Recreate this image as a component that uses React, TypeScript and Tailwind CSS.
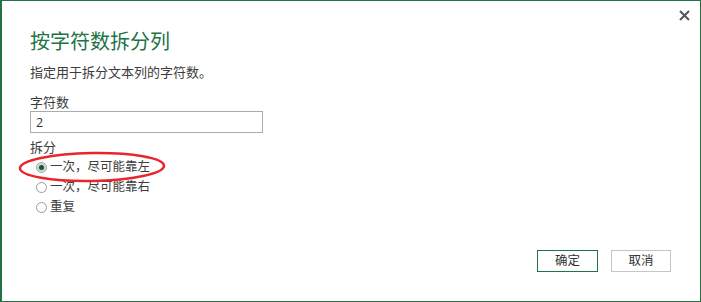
import React, { useState } from 'react';

const FONT = '"Segoe UI","Open Sans","Noto Sans CJK SC","Microsoft YaHei",sans-serif';

const options = ['一次，尽可能靠左', '一次，尽可能靠右', '重复'];

function Radio({ checked }: { checked: boolean }) {
  return (
    <span className="w-[11px] h-[11px] rounded-full border border-[#9a9a9a] bg-white flex items-center justify-center">
      {checked && <span className="w-[5px] h-[5px] rounded-full bg-[#2d4a3a] ring-2 ring-[#bfdccb]" />}
    </span>
  );
}

export default function App() {
  const [count, setCount] = useState('2');
  const [mode, setMode] = useState(0);

  return (
    <div
      className="relative w-[701px] h-[302px] bg-white border border-l-2 border-[#217346] flex flex-col text-[#3c3c3c]"
      style={{ fontFamily: FONT }}
    >
      <button className="absolute top-[6px] right-[8px] w-[16px] h-[16px] flex items-center justify-center text-[#555555]">
        <svg width="11" height="11" viewBox="0 0 11 11">
          <path d="M1 1 L10 10 M10 1 L1 10" stroke="currentColor" strokeWidth="2" />
        </svg>
      </button>

      <div className="pl-[28px] pt-[27px] flex flex-col">
        <h1 className="text-[20px] leading-[28px] text-[#217346] font-normal">按字符数拆分列</h1>
        <p className="mt-[8px] text-[13px] leading-[16px]">指定用于拆分文本列的字符数。</p>

        <label className="mt-[14px] text-[13px] leading-[16px]">字符数</label>
        <input
          value={count}
          onChange={(e) => setCount(e.target.value)}
          className="mt-[1px] w-[233px] h-[22px] border border-[#ababab] px-[5px] text-[12.5px] text-[#333333] outline-none"
        />

        <div className="mt-[6px] text-[13px] leading-[16px]">拆分</div>
        <div className="mt-[2px] flex flex-col">
          {options.map((o, i) => (
            <div key={o} className="h-[20px] flex items-center gap-[3px] pl-[6px] text-[12.5px] cursor-default" onClick={() => setMode(i)}>
              <Radio checked={mode === i} />
              <span>{o}</span>
            </div>
          ))}
        </div>
      </div>

      <div className="mt-auto pb-[29px] pr-[29px] flex justify-end gap-[13px]">
        <button className="w-[61px] h-[22px] border border-[#217346] text-[12.5px] text-[#333333] bg-white">确定</button>
        <button className="w-[60px] h-[22px] border border-[#c6c6c6] text-[12.5px] text-[#333333] bg-white">取消</button>
      </div>

      <svg className="absolute left-[16px] top-[148px] pointer-events-none" width="150" height="36" viewBox="0 0 150 36">
        <ellipse cx="74" cy="18" rx="72" ry="14" fill="none" stroke="#e8262b" strokeWidth="2.5" transform="rotate(-1 74 18)" />
      </svg>
    </div>
  );
}
